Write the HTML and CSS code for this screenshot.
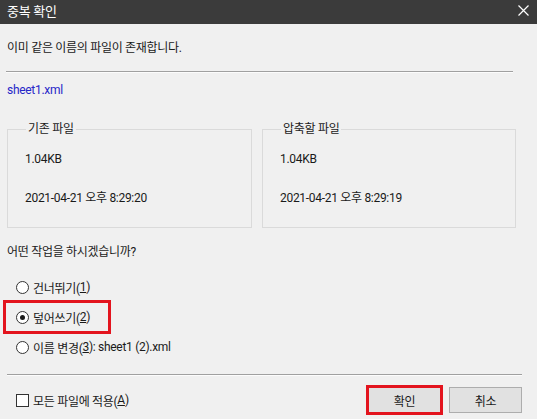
FILE: index.html
```html
<!DOCTYPE html>
<html lang="ko">
<head>
  <meta charset="UTF-8">
  <title>중복 확인</title>
  <link rel="stylesheet" href="styles.css">
</head>
<body>
  <div class="titlebar">
    <span class="title">중복 확인</span>
    <svg class="close" width="11" height="11" viewBox="0 0 11 11">
      <path d="M0.5 0.5 L10.5 10.5 M10.5 0.5 L0.5 10.5" stroke="#fff" stroke-width="1.2"/>
    </svg>
  </div>
  <div class="dialog">
    <p class="message">이미 같은 이름의 파일이 존재합니다.</p>
    <div class="sep sep-top"></div>
    <p class="filename">sheet1.xml</p>

    <div class="groups">
      <fieldset class="group group-old">
        <legend>기존 파일</legend>
        <div class="size">1.04KB</div>
        <div class="date">2021-04-21 오후 8:29:20</div>
      </fieldset>
      <fieldset class="group group-new">
        <legend>압축할 파일</legend>
        <div class="size">1.04KB</div>
        <div class="date">2021-04-21 오후 8:29:19</div>
      </fieldset>
    </div>

    <p class="question">어떤 작업을 하시겠습니까?</p>
    <div class="options">
      <div class="option"><span class="radio"></span>건너뛰기(<u>1</u>)</div>
      <div class="option marked"><span class="radio checked"></span>덮어쓰기(<u>2</u>)</div>
      <div class="option"><span class="radio"></span>이름 변경(<u>3</u>): sheet1 (2).xml</div>
    </div>

    <div class="sep sep-bottom"></div>
    <div class="footer">
      <div class="apply"><span class="check"></span>모든 파일에 적용(<u>A</u>)</div>
      <div class="buttons">
        <button class="btn btn-ok">확인</button>
        <button class="btn">취소</button>
      </div>
    </div>
  </div>
</body>
</html>
```

FILE: styles.css
```css
body {
  margin: 0;
  width: 537px;
  height: 419px;
  overflow: hidden;
  background: #f0f0f0;
  font-family: Roboto, "Noto Sans CJK KR", sans-serif;
  font-size: 12px;
  letter-spacing: -0.3px;
  color: #1a1a1a;
}
.titlebar {
  height: 24px;
  background: #3b3b3b;
  color: white;
  display: flex;
  align-items: center;
  justify-content: space-between;
  padding: 0 8px 0 7px;
}
.title {
  font-size: 13px;
  line-height: 16px;
}
.close {
  margin-top: -4px;
}
.dialog {
  padding: 0 7px;
}
p {
  margin: 0;
  line-height: 16px;
}
.message {
  padding-top: 16px;
}
.sep {
  height: 1px;
  background: #a0a0a0;
  border-bottom: 1px solid #fcfcfc;
}
.sep-top {
  margin: 15px 17px 0 -1px;
}
.filename {
  margin-top: 9px;
  color: #2626c8;
}
.groups {
  display: flex;
  gap: 10px;
  margin-top: 23px;
}
.group {
  margin: 0;
  padding: 14px 0 0 17px;
  height: 107px;
  box-sizing: border-box;
  border: 1px solid #dadada;
  line-height: 16px;
}
.group legend {
  padding: 0 2px;
  margin-left: 1px;
  color: #1a1a1a;
}
.group-old {
  width: 245px;
}
.group-new {
  width: 254px;
}
.date {
  margin-top: 23px;
}
.question {
  margin-top: 16px;
}
.options {
  margin-top: 12px;
}
.option {
  display: flex;
  align-items: center;
  height: 30px;
  padding-left: 9px;
}
.option.marked {
  width: 92px;
  height: 28px;
  margin: 1px 0 1px -1px;
  padding-left: 10px;
  outline: 3px solid #e3141e;
}
.radio {
  width: 11px;
  height: 11px;
  border: 1px solid #333;
  border-radius: 50%;
  background: white;
  margin-right: 4px;
  position: relative;
}
.radio.checked::after {
  content: "";
  position: absolute;
  left: 3px;
  top: 3px;
  width: 5px;
  height: 5px;
  border-radius: 50%;
  background: #1a1a1a;
}
.sep-bottom {
  margin: 12px 8px 0 0;
}
.footer {
  display: flex;
  justify-content: space-between;
  align-items: center;
  margin-top: 11px;
  padding-right: 8px;
}
.apply {
  display: flex;
  align-items: center;
  padding-left: 9px;
}
.check {
  width: 11px;
  height: 11px;
  border: 1px solid #333;
  background: white;
  margin-right: 4px;
}
.buttons {
  display: flex;
  gap: 8px;
}
.btn {
  width: 73px;
  height: 26px;
  background: #e1e1e1;
  border: 1px solid #adadad;
  font-family: inherit;
  font-size: 12px;
  letter-spacing: inherit;
  color: #1a1a1a;
  padding: 0;
}
.btn-ok {
  outline: 3px solid #e3141e;
  outline-offset: -1px;
}
```
